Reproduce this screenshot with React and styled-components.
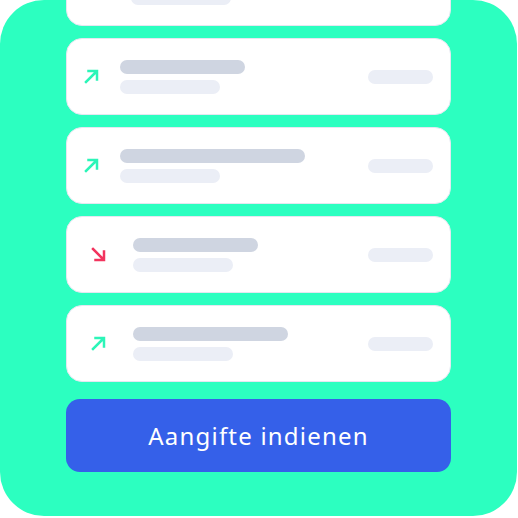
import React from 'react';
import styled, { createGlobalStyle } from 'styled-components';

const GlobalStyle = createGlobalStyle`
	html, body {
		margin: 0;
		padding: 0;
		background: #ffffff;
	}
`;

const Panel = styled.div`
	width: 517px;
	height: 516px;
	border-radius: 44px;
	background: #2cffc0;
	overflow: hidden;
	display: flex;
	flex-direction: column;
	justify-content: flex-end;
	padding: 0 66px 44px 66px;
	box-sizing: border-box;
`;

const List = styled.div`
	display: flex;
	flex-direction: column;
	gap: 12px;
`;

const Card = styled.div`
	flex-shrink: 0;
	height: 77px;
	box-sizing: border-box;
	background: #ffffff;
	border: 1.5px solid #e4e7f1;
	border-radius: 16px;
	display: flex;
	align-items: center;
	padding: 0 17px 0 ${(p) => p.$indent}px;
`;

const Icon = styled.svg`
	width: 15px;
	height: 15px;
	flex-shrink: 0;
	margin-right: ${(p) => p.$gap}px;
`;

const Lines = styled.div`
	display: flex;
	flex-direction: column;
	gap: 6px;
	flex: 1;
`;

const Bar = styled.div`
	height: 14px;
	border-radius: 7px;
	width: ${(p) => p.$width}px;
	background: ${(p) => (p.$dark ? '#cfd5e1' : '#ebeef6')};
`;

const Amount = styled(Bar)`
	flex-shrink: 0;
`;

const Submit = styled.button`
	flex-shrink: 0;
	margin-top: 17px;
	height: 73px;
	border: none;
	border-radius: 14px;
	background: #3560e9;
	color: #ffffff;
	font-family: 'Noto Sans', 'Open Sans', sans-serif;
	font-size: 24px;
	font-weight: 400;
	letter-spacing: 1.2px;
	cursor: pointer;
`;

const Arrow = ({ down, gap }) =>
	down ? (
		<Icon $gap={gap} viewBox="0 0 15 15" fill="none" stroke="#f2345e" strokeWidth="2.5" strokeLinecap="square">
			<path d="M2 2 L12.5 12.5 M13 4.5 V13 H4.5" />
		</Icon>
	) : (
		<Icon $gap={gap} viewBox="0 0 15 15" fill="none" stroke="#2cf5b8" strokeWidth="2.5" strokeLinecap="square">
			<path d="M2 13 L12.5 2.5 M4.5 2 H13 V10.5" />
		</Icon>
	);

const rows = [
	{ indent: 22, gap: 27, title: 140, down: false },
	{ indent: 17, gap: 21, title: 125, down: false },
	{ indent: 17, gap: 21, title: 185, down: false },
	{ indent: 24, gap: 27, title: 125, down: true },
	{ indent: 24, gap: 27, title: 155, down: false },
];

class App extends React.Component {
	render() {
		return (
			<>
				<GlobalStyle />
				<Panel>
					<List>
						{rows.map((row, i) => (
							<Card key={i} $indent={row.indent}>
								<Arrow down={row.down} gap={row.gap} />
								<Lines>
									<Bar $dark $width={row.title} />
									<Bar $width={100} />
								</Lines>
								<Amount $width={65} />
							</Card>
						))}
					</List>
					<Submit>Aangifte indienen</Submit>
				</Panel>
			</>
		);
	}
}
export default App;
